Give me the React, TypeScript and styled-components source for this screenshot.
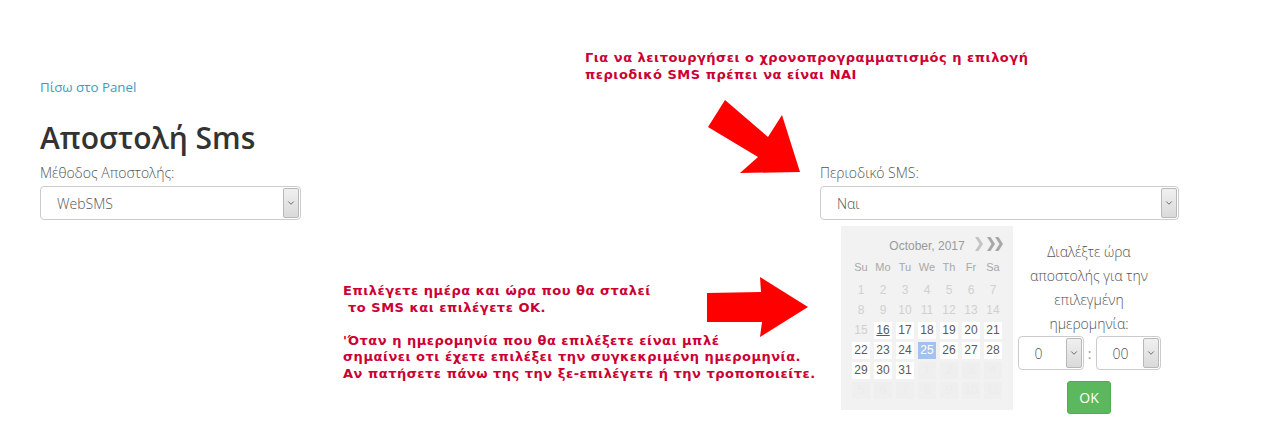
import styled, { createGlobalStyle } from "styled-components";
import { ChevronDown } from "lucide-react";

const GlobalStyle = createGlobalStyle`
  body {
    margin: 0;
    background: #fff;
    font-family: "Open Sans", "Noto Sans", sans-serif;
  }
`;

type DayKind = "off" | "next" | "on" | "today" | "picked";

const weekDays = ["Su", "Mo", "Tu", "We", "Th", "Fr", "Sa"];

// October 2017 starts on a Sunday; past dates disabled, 25 picked
const buildDays = () => {
  const days: { n: number; kind: DayKind }[] = [];
  for (let d = 1; d <= 31; d++) {
    let kind: DayKind = d < 16 ? "off" : "on";
    if (d === 16) kind = "today";
    if (d === 25) kind = "picked";
    days.push({ n: d, kind });
  }
  for (let d = 1; d <= 11; d++) days.push({ n: d, kind: "next" });
  return days;
};

function Select({ value, width }: { value: string; width: number }) {
  return (
    <SelectBox $width={width}>
      <span>{value}</span>
      <ArrowBox>
        <ChevronDown size={10} strokeWidth={2} />
      </ArrowBox>
    </SelectBox>
  );
}

function Calendar() {
  return (
    <CalendarBox>
      <CalHeader>
        October, 2017
        <NextIcons width="30" height="14" viewBox="0 0 30 14">
          <polygon points="0,0 3.5,0 8,7 3.5,14 0,14 4.5,7" fill="#c4c4c4" />
          <polygon points="12,0 15.5,0 20,7 15.5,14 12,14 16.5,7" fill="#a8a8a8" />
          <polygon points="20,0 23.5,0 28,7 23.5,14 20,14 24.5,7" fill="#a8a8a8" />
        </NextIcons>
      </CalHeader>
      <DayGrid>
        {weekDays.map((w) => (
          <WeekDay key={w}>{w}</WeekDay>
        ))}
      </DayGrid>
      <DayGrid>
        {buildDays().map((d, i) => (
          <Cell key={i}>
            <Day $kind={d.kind}>{d.n}</Day>
          </Cell>
        ))}
      </DayGrid>
    </CalendarBox>
  );
}

export default function App() {
  return (
    <Page>
      <GlobalStyle />
      <Main>
        <BackLink href="#">Πίσω στο Panel</BackLink>
        <Title>Αποστολή Sms</Title>
        <Columns>
          <Field $width={261}>
            <Label>Μέθοδος Αποστολής:</Label>
            <Select value="WebSMS" width={261} />
          </Field>
          <Field $width={359}>
            <Label>Περιοδικό SMS:</Label>
            <Select value="Ναι" width={359} />
            <Picker>
              <Calendar />
              <TimePanel>
                <TimeText>
                  Διαλέξτε ώρα
                  <br />
                  αποστολής για την
                  <br />
                  επιλεγμένη
                  <br />
                  ημερομηνία:
                </TimeText>
                <TimeRow>
                  <Select value="0" width={66} />
                  <Colon>:</Colon>
                  <Select value="00" width={65} />
                </TimeRow>
                <OkButton>OK</OkButton>
              </TimePanel>
            </Picker>
          </Field>
        </Columns>
      </Main>

      <Note $left={585} $top={50}>
        Για να λειτουργήσει ο χρονοπρογραμματισμός η επιλογή
        <br />
        περιοδικό SMS πρέπει να είναι ΝΑΙ
      </Note>
      <Note $left={343} $top={283}>
        Επιλέγετε ημέρα και ώρα που θα σταλεί
        <br />
        &nbsp;το SMS και επιλέγετε ΟΚ.
        <br />
        <br />
        'Όταν η ημερομηνία που θα επιλέξετε είναι μπλέ
        <br />
        σημαίνει οτι έχετε επιλέξει την συγκεκριμένη ημερομηνία.
        <br />
        Αν πατήσετε πάνω της την ξε-επιλέγετε ή την τροποποιείτε.
      </Note>

      <Arrow $left={706} $top={98} width="96" height="78" viewBox="0 0 96 78">
        <polygon points="19,2 62,39 76,17 94,74 34,75 52,59 2,29" fill="#ff0000" />
      </Arrow>
      <Arrow $left={705} $top={275} width="106" height="64" viewBox="0 0 106 64">
        <polygon points="2,18 56,17 55,2 103,32 55,62 57,47 2,47" fill="#ff0000" />
      </Arrow>
    </Page>
  );
}

const Page = styled.div`
  position: relative;
  width: 1275px;
  height: 426px;
  overflow: hidden;
  background: #fff;
`;

const Main = styled.div`
  display: flex;
  flex-direction: column;
  align-items: flex-start;
  padding: 78px 96px 0 40px;
`;

const BackLink = styled.a`
  font-size: 13.3px;
  line-height: 18px;
  font-weight: 400;
  color: #3a9cc6;
  text-decoration: none;
`;

const Title = styled.h1`
  margin: 25px 0 0;
  font-size: 30px;
  line-height: 34px;
  font-weight: 600;
  color: #333;
`;

const Columns = styled.div`
  display: flex;
  justify-content: space-between;
  align-self: stretch;
  margin-top: 8px;
`;

const Field = styled.div<{ $width: number }>`
  width: ${(p) => p.$width}px;
  display: flex;
  flex-direction: column;
`;

const Label = styled.div`
  font-size: 14px;
  line-height: 20px;
  font-weight: 300;
  color: #555;
  margin-bottom: 3px;
`;

const SelectBox = styled.div<{ $width: number }>`
  width: ${(p) => p.$width}px;
  height: 34px;
  box-sizing: border-box;
  border: 1px solid #ccc;
  border-radius: 4px;
  background: #fff;
  display: flex;
  align-items: center;
  justify-content: space-between;
  padding: 0 1px 0 16px;
  font-size: 14px;
  font-weight: 300;
  color: #555;
`;

const ArrowBox = styled.span`
  width: 16px;
  height: 30px;
  box-sizing: border-box;
  border: 1px solid #b8b8b8;
  border-radius: 2px;
  background: linear-gradient(#f0f0f0, #dadada);
  display: flex;
  align-items: center;
  justify-content: center;
  color: #555;
`;

const Picker = styled.div`
  display: flex;
  align-items: flex-start;
  gap: 4px;
  margin-top: 6px;
  padding-left: 21px;
`;

const CalendarBox = styled.div`
  position: relative;
  width: 172px;
  height: 184px;
  box-sizing: border-box;
  padding: 12px 0 0;
  background: #f2f2f2;
  font-family: "Liberation Sans", Arial, sans-serif;
`;

const CalHeader = styled.div`
  text-align: center;
  font-size: 12px;
  line-height: 16px;
  color: #9a9a9a;
  margin-bottom: 6px;
`;

const NextIcons = styled.svg`
  position: absolute;
  left: 134px;
  top: 11px;
`;

const DayGrid = styled.div`
  display: grid;
  grid-template-columns: repeat(7, 22px);
  grid-auto-rows: 20px;
  justify-content: center;
`;

const WeekDay = styled.div`
  display: flex;
  align-items: center;
  justify-content: center;
  height: 14px;
  margin-bottom: 6px;
  font-size: 11px;
  color: #a8a8a8;
`;

const Cell = styled.div`
  display: flex;
  align-items: center;
  justify-content: center;
`;

const dayColors: Record<DayKind, { bg: string; fg: string }> = {
  off: { bg: "transparent", fg: "#d0d0d0" },
  next: { bg: "#efefef", fg: "#ececec" },
  on: { bg: "#fff", fg: "#5a5a5a" },
  today: { bg: "#fff", fg: "#5a5a5a" },
  picked: { bg: "#a4c2ec", fg: "#fff" },
};

const Day = styled.span<{ $kind: DayKind }>`
  width: 18px;
  height: 17px;
  display: flex;
  align-items: center;
  justify-content: center;
  font-size: 12px;
  background: ${(p) => dayColors[p.$kind].bg};
  color: ${(p) => dayColors[p.$kind].fg};
  text-decoration: ${(p) => (p.$kind === "today" ? "underline" : "none")};
`;

const TimePanel = styled.div`
  width: 144px;
  margin-top: 14px;
  display: flex;
  flex-direction: column;
  align-items: center;
`;

const TimeText = styled.div`
  text-align: center;
  font-size: 14px;
  line-height: 24px;
  font-weight: 300;
  color: #555;
`;

const TimeRow = styled.div`
  display: flex;
  align-items: center;
`;

const Colon = styled.span`
  width: 12px;
  text-align: center;
  font-size: 14px;
  color: #999;
`;

const OkButton = styled.button`
  margin-top: 11px;
  width: 44px;
  height: 33px;
  border: 1px solid #4cae4c;
  border-radius: 3px;
  background: #5cb85c;
  color: #fff;
  font-family: "Open Sans", sans-serif;
  font-size: 14px;
  padding: 0;
`;

const Note = styled.div<{ $left: number; $top: number }>`
  position: absolute;
  left: ${(p) => p.$left}px;
  top: ${(p) => p.$top}px;
  font-family: "DejaVu Sans", Verdana, sans-serif;
  font-size: 13px;
  font-weight: 700;
  letter-spacing: 0.5px;
  line-height: 16.5px;
  color: #cc0033;
  white-space: nowrap;
`;

const Arrow = styled.svg<{ $left: number; $top: number }>`
  position: absolute;
  left: ${(p) => p.$left}px;
  top: ${(p) => p.$top}px;
`;
